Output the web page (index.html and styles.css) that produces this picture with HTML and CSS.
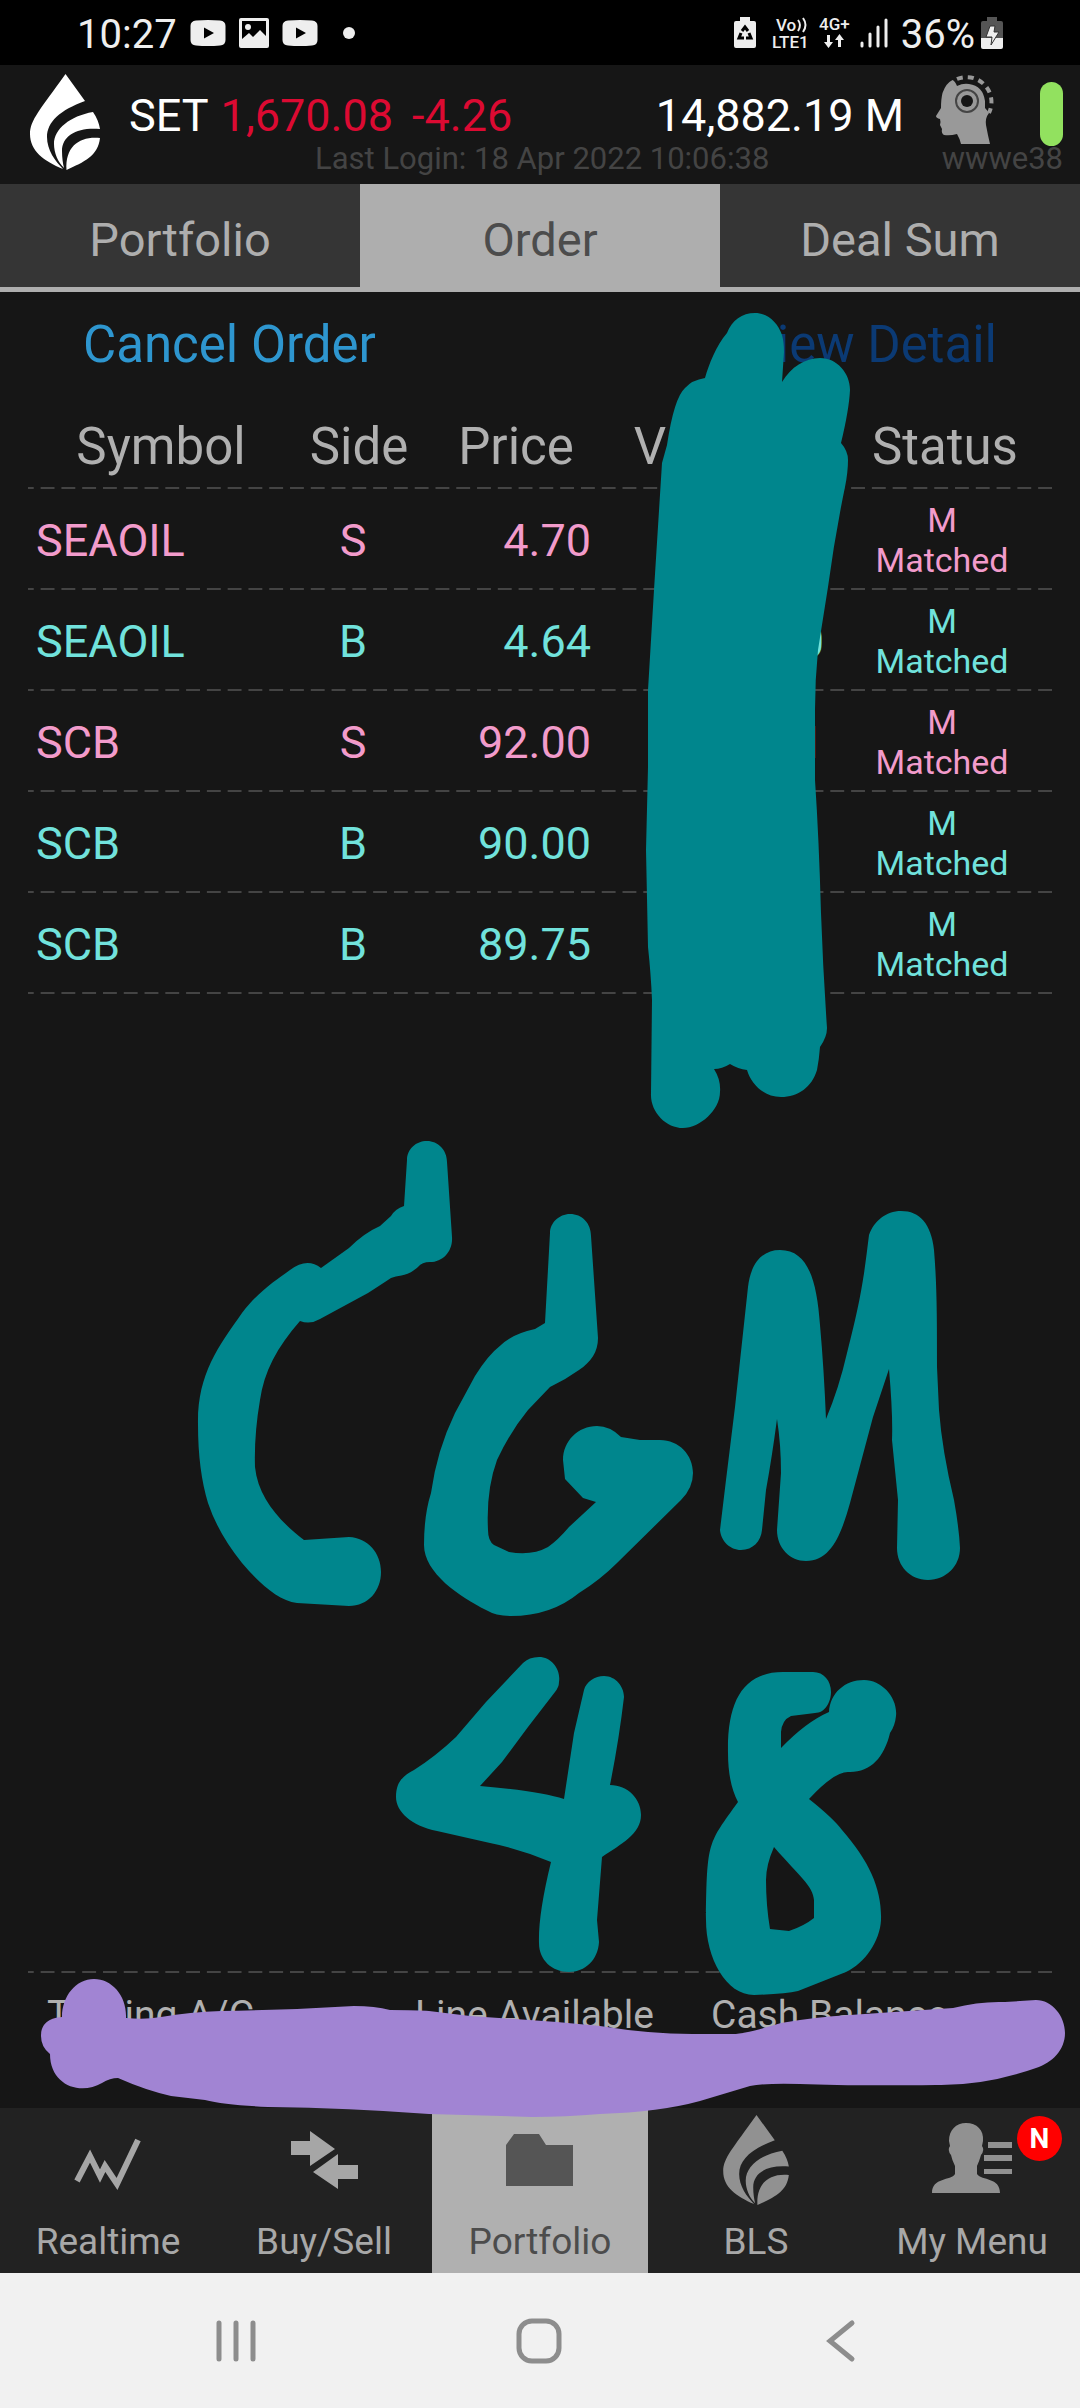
FILE: index.html
```html
<!DOCTYPE html>
<html lang="en">
<head>
<meta charset="utf-8">
<meta name="viewport" content="width=device-width, initial-scale=1">
<title>Order</title>
<link rel="stylesheet" href="styles.css">
</head>
<body>
<svg class="defs" aria-hidden="true">
  <symbol id="drop" viewBox="0 0 71 96">
    <path d="M35.500 0L55 27C30 36 17 48 17 63C17 76 25 87 33 95C14 87 0 77 0 60C0 46 10 36 35.500 0Z"/>
    <path d="M63 38C67 44 69 49 70 55C48 53 32 61 32 77C32 84 33 90 34 94C28 88 24 79 24 70C24 55 40 42 63 38Z"/>
    <path d="M70 64C50 62 35 72 36.500 96C54 88 68 82 70 64Z"/>
  </symbol>
  <symbol id="video" viewBox="0 0 36 26">
    <path fill-rule="evenodd" d="M6 .5Q18-.5 30 .5Q35.500 1 35.500 6V20Q35.500 25 30 25.500Q18 26.500 6 25.500Q.5 25 .5 20V6Q.5 1 6 .5ZM14 7.500V18.500L24 13Z"/>
  </symbol>
</svg>

<div class="app">
  <div class="status-bar">
    <div class="status-group">
      <span>10:27</span>
      <svg class="st-video" width="36" height="26"><use href="#video"/></svg>
      <svg width="30" height="30" viewBox="0 0 30 30"><path fill-rule="evenodd" d="M2 0H28Q30 0 30 2V28Q30 30 28 30H2Q0 30 0 28V2Q0 0 2 0ZM3 3V21L10 15L14 19L21 12L27 18V3Z"/><circle cx="9" cy="9" r="3"/></svg>
      <svg width="36" height="26"><use href="#video"/></svg>
      <svg class="st-dot" width="12" height="12"><circle cx="6" cy="6" r="6"/></svg>
    </div>
    <div class="status-group">
      <svg width="22" height="31" viewBox="0 0 22 31"><path d="M6 0H16V4H20Q22 4 22 6V29Q22 31 20 31H2Q0 31 0 29V6Q0 4 2 4H6Z"/><path d="M8 14L11 10L14 14M15 16L17 21H12M10 21H5L7 16" fill="none" stroke="#000" stroke-width="3"/></svg>
      <svg class="st-volte" width="40" height="46" viewBox="0 -7 40 46"><text x="4" y="14">Vo</text><path d="M26 3Q30 8 26 14M31 1Q36 8 31 15" fill="none" stroke="#eee" stroke-width="2"/><text x="0" y="31">LTE1</text></svg>
      <svg class="st-net" width="36" height="47" viewBox="0 -7 36 47"><text x="0" y="14">4G+</text><path d="M8 19H11V26H14L9.500 32L5 26H8ZM19 31H22V24H25L20.500 18L16 24H19Z"/></svg>
      <svg class="st-signal" width="28" height="30" viewBox="0 0 28 30"><path d="M2 25V28M10 16V28M18 9V28M26 2V28" stroke="#eee" stroke-width="3" stroke-linecap="round"/></svg>
      <span>36%</span>
      <svg class="st-power" width="22" height="32" viewBox="0 0 22 32"><path fill="#555" d="M6 0H16V4H20Q22 4 22 6V22H0V6Q0 4 2 4H6Z"/><path d="M0 21H22V30Q22 32 20 32H2Q0 32 0 30Z"/><path d="M9 9H14L13 15H18L10 28L11 20H5Z" stroke="#333" stroke-width="1"/></svg>
    </div>
  </div>

  <header class="market">
    <svg class="logo" width="71" height="96" role="img" aria-label="BLS"><use href="#drop"/></svg>
    <div class="market-info">
      <div class="market-line">
        <span>SET</span>
        <span class="down">1,670.08</span>
        <span class="down change">-4.26</span>
        <span class="total">14,882.19 M</span>
        <svg class="head" width="60" height="70" viewBox="0 0 60 70"><path fill="#999" d="M16.500 5Q19 6 21 11Q27 8 33 9Q47 11 49 26V33Q51 35 53 38Q49 43 50 50Q52 61 54 69H25Q24 64 21 59Q14 61 8 60Q5 58 6 54L4 50Q5 47 4 44Q0 43 0 41L5 33Q5 24 6.500 18Q10 8 16.500 5Z"/><circle cx="31" cy="26" r="11" fill="none" stroke="#444" stroke-width="2"/><circle cx="31" cy="26" r="6" fill="#161616"/><path d="M21 4A25 25 0 0 1 53 38" fill="none" stroke="#999" stroke-width="4" stroke-dasharray="6 5"/></svg>
        <span class="online"></span>
      </div>
      <div class="login-line"><span>Last Login: 18 Apr 2022 10:06:38</span><span>wwwe38</span></div>
    </div>
  </header>

  <nav class="tabs">
    <a href="#portfolio">Portfolio</a>
    <a href="#order" class="on">Order</a>
    <a href="#deal">Deal Sum</a>
  </nav>

  <main class="orders">
    <div class="actions">
      <button type="button" class="cancel">Cancel Order</button>
      <button type="button" class="detail">View Detail</button>
    </div>
    <table>
      <colgroup><col class="c-symbol"><col class="c-side"><col class="c-price"><col class="c-volume"><col class="c-status"></colgroup>
      <thead>
        <tr><th>Symbol</th><th>Side</th><th>Price</th><th>Volume</th><th class="status">Status</th></tr>
      </thead>
      <tbody>
        <tr class="sell"><td>SEAOIL</td><td class="side">S</td><td class="price">4.70</td><td class="volume"></td><td class="status">M<br>Matched</td></tr>
        <tr class="buy"><td>SEAOIL</td><td class="side">B</td><td class="price">4.64</td><td class="volume">0</td><td class="status">M<br>Matched</td></tr>
        <tr class="sell"><td>SCB</td><td class="side">S</td><td class="price">92.00</td><td class="volume">1</td><td class="status">M<br>Matched</td></tr>
        <tr class="buy"><td>SCB</td><td class="side">B</td><td class="price">90.00</td><td class="volume"></td><td class="status">M<br>Matched</td></tr>
        <tr class="buy"><td>SCB</td><td class="side">B</td><td class="price">89.75</td><td class="volume"></td><td class="status">M<br>Matched</td></tr>
      </tbody>
    </table>
  </main>

  <section class="account">
    <span>Trading A/C</span>
    <span>Line Available</span>
    <span>Cash Balance</span>
  </section>

  <nav class="menu">
    <a href="#realtime"><svg viewBox="0 0 100 100"><path d="M19 69L32 44L42 64L47 54L59 72L80 28" fill="none" stroke="#a6a6a6" stroke-width="6"/></svg>Realtime</a>
    <a href="#buysell"><svg viewBox="0 0 100 100"><path fill="#a6a6a6" d="M17 29H36V19L61 37L36 54V43H17ZM84 53H64V42L39 60L64 77V67H84Z"/></svg>Buy/Sell</a>
    <a href="#portfolio" class="on"><svg viewBox="0 0 100 100"><path fill="#555" d="M16 33L24 22H49L56 33H83V74H16Z"/></svg>Portfolio</a>
    <a href="#bls"><svg viewBox="0 0 100 100"><use href="#drop" x="17" y="3" width="67" height="90" fill="#919191"/></svg>BLS</a>
    <a href="#mymenu"><svg viewBox="0 0 100 100"><path fill="#919191" d="M44 11C55 11 62 18 61 29L60 34Q63 38 59 43Q57 50 55 54V62C60 69 78 65 78 81H10C10 65 29 69 33 62V54Q30 48 29 43Q25 38 28 34L27 29C27 18 34 11 44 11ZM66 30H90V36H66ZM62 43H90V49H62ZM62 57H90V62H62Z"/></svg>My Menu<b class="badge">N</b></a>
  </nav>

  <div class="system-nav">
    <button type="button" aria-label="Recent apps"><svg viewBox="0 0 48 48"><path d="M6 6V42M23 6V42M40 6V42" /></svg></button>
    <button type="button" aria-label="Home"><svg viewBox="0 0 48 48"><rect x="4" y="4" width="40" height="40" rx="13"/></svg></button>
    <button type="button" aria-label="Back"><svg viewBox="0 0 48 48"><path d="M36 6L14 24L36 42"/></svg></button>
  </div>

  <svg class="ink" viewBox="0 0 1080 2408" role="img" aria-label="Marker scribbles">
    <g fill="#00868d">
      <path d="M705 378C709 364 716 346 727 333C732 320 742 313 755 313C768 313 778 323 782 335Q784 342 784 352L782 382C791 367 805 358 820 358C837 358 850 373 850 390Q849 410 841 443Q848 451 848 460Q848 472 845 487Q835 535 828 587L818 650Q815 680 815 710V780Q819 840 821 913Q823 970 827 1028Q827 1037 820 1047Q819 1060 817 1070C812 1087 798 1097 781 1097C764 1097 751 1084 747 1070Q738 1069 730 1064Q722 1069 714 1069Q721 1080 720 1092C720 1110 700 1128 683 1128C666 1128 650 1112 651 1093L652 1000Q651 975 648 947L646 850L648 767V690L654 590L662 463L667 445Q674 398 685 388Q692 380 705 378Z"/>
      <path d="M427 1141C438 1141 447 1150 447 1162L452 1237C453 1251 443 1262 430 1262Q422 1262 418 1267C407 1277 398 1275 391 1278Q382 1284 368 1293L320 1319Q310 1325 300 1321C277 1347 264 1372 260 1400Q254 1435 255 1467C258 1497 279 1521 304 1540L349 1537C368 1538 381 1553 381 1572C381 1591 368 1606 349 1606L297 1603C278 1601 258 1582 242 1563Q218 1533 208 1503Q198 1470 198 1425C197 1375 218 1347 242 1313C258 1292 276 1280 290 1270Q307 1257 321 1268L349 1248Q364 1233 380 1226L391 1216Q395 1209 404 1206L407 1160C407 1149 416 1141 427 1141Z"/>
      <path d="M570 1214C582 1214 591 1223 591 1236L598 1338C598 1352 591 1362 579 1370Q565 1380 550 1387L528 1410Q510 1432 497 1460Q486 1490 488 1530Q488 1541 494 1545L509 1552Q532 1556 548 1547Q558 1540 569 1527L596 1502L583 1498L565 1479L563 1460C563 1441 578 1426 597 1426Q610 1426 621 1437L640 1440H660C679 1440 693 1455 693 1473Q693 1488 681 1500L617 1563Q600 1580 579 1593Q551 1616 511 1616Q496 1616 486 1610C460 1597 424 1573 424 1545Q424 1515 431 1493Q437 1450 455 1413L475 1376Q488 1355 501 1345Q512 1334 535 1329L545 1323L550 1233C550 1223 559 1214 570 1214Z"/>
      <path d="M720 1530C721 1541 730 1550 741 1550C753 1550 761 1541 762 1530L766 1490Q772 1457 777 1419Q781 1445 781 1473L777 1530C777 1548 790 1561 806 1561C831 1561 841 1535 850 1503L873 1417L889 1369Q893 1415 892 1440L898 1500L897 1548C897 1566 910 1580 928 1580C946 1580 960 1566 960 1548Q959 1528 954 1500Q942 1450 939 1410L937 1367C937 1320 937 1285 934 1250C931 1224 920 1211 901 1211C886 1211 874 1221 869 1235C864 1275 862 1295 847 1353Q839 1388 826 1419Q824 1370 820 1325C817 1283 809 1250 780 1250C763 1250 751 1262 748 1287L735 1407L726 1480Z"/>
      <path d="M539 1657C552 1657 561 1670 559 1682Q559 1687 555 1692L528 1727L502 1762L480 1786Q540 1791 564 1799L574 1733L584 1690C586 1682 595 1676 604 1676C616 1676 624 1687 624 1697Q619 1740 610 1785C628 1785 641 1799 641 1815C641 1834 621 1844 602 1857L597 1920L599 1942C598 1960 585 1972 569 1972C552 1972 539 1960 539 1943Q538 1915 551 1862Q520 1849 490 1843L437 1831C412 1826 396 1812 396 1797C396 1780 405 1775 414 1770Q436 1756 456 1737L486 1702L523 1663Q529 1657 539 1657Z"/>
      <path fill-rule="evenodd" d="M813 1672C824 1672 831 1681 831 1692C831 1702 825 1713 815 1713L791 1716Q782 1720 781 1732V1748Q806 1722 829 1712C830 1693 845 1680 864 1680C882 1680 898 1698 896 1716Q895 1726 890 1733C884 1758 870 1773 848 1772Q834 1772 809 1799Q833 1818 842 1830C870 1862 882 1890 881 1920C880 1941 865 1963 846 1972L798 1991Q785 1994 754 1995C726 1995 706 1958 706 1920C707 1840 708 1844 738 1802Q728 1783 728 1753C727 1700 744 1672 783 1672ZM774 1847Q766 1865 766 1880Q766 1905 770 1929L789 1931Q804 1926 814 1918V1900C813 1886 800 1877 774 1847Z"/>
    </g>
    <path fill="#a184d3" d="M62 2017C62 1996 76 1979 94 1979C112 1979 127 1996 126 2018Q145 2020 161 2017Q190 2012 221 2011Q290 2010 354 2006Q375 2006 390 2010Q418 2010 429 2011L470 2016L557 2022L600 2026Q650 2034 692 2034H733Q745 2034 781 2023Q815 2017 850 2015L953 2008Q980 2001 1005 2002L1036 2000C1052 2000 1065 2016 1065 2033C1065 2050 1052 2063 1036 2068Q985 2086 936 2085Q850 2086 800 2084Q765 2083 750 2086Q720 2095 700 2101Q660 2112 600 2114Q565 2117 532 2117L429 2114Q350 2108 268 2107Q225 2105 205 2100L171 2096Q145 2090 118 2078Q110 2078 102 2083C80 2096 50 2085 50 2054Q41 2047 41 2036C41 2022 51 2018 62 2017Z"/>
  </svg>
</div>
</body>
</html>
```

FILE: styles.css
```css
* { box-sizing: border-box; }

body {
  margin: 0;
  background: #161616;
  font-family: Roboto, "Liberation Sans", sans-serif;
  color: #b0b0b0;
}

a { color: inherit; text-decoration: none; }

button {
  padding: 0;
  border: 0;
  background: none;
  font: inherit;
  color: inherit;
}

svg { display: block; flex: none; }

.defs { position: absolute; width: 0; height: 0; }

.app {
  position: relative;
  display: flex;
  flex-direction: column;
  min-height: 100vh;
}

/* Phone status bar */
.status-bar {
  display: flex;
  justify-content: space-between;
  height: 65px;
  padding: 0 77px;
  background: #000;
  color: #eee;
  fill: #eee;
  font-size: 40px;
}

.status-group { display: flex; align-items: center; gap: 13px; }
.status-group text { font-size: 17px; font-weight: 500; }
.status-group span { padding-top: 3px; }
.st-dot { margin-left: 12px; }
.st-volte { margin-left: 3px; }
.st-net { margin-left: -6px; }
.st-signal { margin-left: -8px; }
.st-power { margin-left: -7px; }

/* Market summary */
.market {
  display: flex;
  gap: 28px;
  height: 119px;
  padding: 0 17px 0 30px;
}

.logo { margin-top: 9px; fill: #fff; }
.market-info { flex: 1; }

.market-line {
  display: flex;
  align-items: flex-start;
  gap: 12px;
  height: 77px;
  padding-top: 10px;
  color: #fff;
  font-size: 45px;
  line-height: 82px;
}

.down { color: #dc0a32; }
.change { margin-left: 7px; }
.total { margin-left: auto; }
.head { margin-left: 20px; }

.online {
  width: 23px;
  height: 64px;
  margin: 7px 0 0 32px;
  border-radius: 12px;
  background: #92e15f;
}

.login-line {
  display: flex;
  justify-content: space-between;
  padding-left: 186px;
  color: #444;
  font-size: 31px;
  line-height: 34px;
}

/* Page tabs */
.tabs {
  display: grid;
  grid-template-columns: repeat(3, 1fr);
  height: 108px;
  border-bottom: 5px solid #aeaeae;
  background: #353535;
  color: #aeaeae;
  font-size: 47px;
  text-align: center;
}

.tabs a { padding-top: 26px; line-height: 60px; }
.tabs .on { background: #aeaeae; color: #4c4c4c; }

/* Orders */
.orders { flex: 1; padding: 0 28px; }

.actions {
  display: flex;
  justify-content: space-between;
  padding: 23px 55px 26px;
  font-size: 51px;
  line-height: 60px;
}

.cancel { color: #2e96cf; }
.detail { color: #0b3a74; }

table { width: 100%; border-collapse: collapse; table-layout: fixed; }
.c-symbol { width: 266px; }
.c-side { width: 130px; }
.c-price { width: 184px; }
.c-volume { width: 224px; }
.c-status { width: 220px; }

tr, .account {
  background-image: linear-gradient(90deg, transparent 7px, #444 7px);
  background-repeat: repeat-x;
  background-size: 2.03% 2px;
}

tr { background-position: right bottom; }

th {
  padding: 16px 0 12px;
  font-size: 51px;
  font-weight: 400;
  line-height: 60px;
}

td {
  height: 101px;
  padding: 2px 0 0 8px;
  font-size: 45px;
  line-height: 52px;
}

.side { padding: 2px 12px 0 0; text-align: center; }
.price { padding: 2px 17px 0 0; text-align: right; }
.volume { padding: 2px 8px 0 0; text-align: right; }
td.status { padding: 0; font-size: 34px; line-height: 40px; text-align: center; }
th.status { padding-left: 6px; }
.sell { color: #f29bcb; }
.buy { color: #71e2dc; }

/* Account summary */
.account {
  display: grid;
  grid-template-columns: 368fr 296fr 341fr;
  height: 137px;
  margin: 0 28px;
  padding: 21px 0 0 19px;
  background-position: right top;
  font-size: 39px;
  line-height: 46px;
}

/* Bottom menu */
.menu {
  display: grid;
  grid-template-columns: repeat(5, 1fr);
  height: 165px;
  background: #222;
  font-size: 37px;
  line-height: 44px;
}

.menu a {
  position: relative;
  display: flex;
  flex-direction: column;
  align-items: center;
  padding-top: 4px;
  color: #a8a8a8;
}

.menu svg { width: 100px; height: 100px; margin-bottom: 8px; }
.menu .on { background: #b0b0b0; color: #4c4c4c; }

.badge {
  position: absolute;
  top: 8px;
  right: 18px;
  width: 45px;
  height: 45px;
  border-radius: 50%;
  background: #f00;
  color: #fff;
  font-size: 28px;
  line-height: 45px;
  text-align: center;
}

/* Phone navigation */
.system-nav {
  display: flex;
  justify-content: space-between;
  height: 135px;
  padding: 0 216px 0 213px;
  background: #f1f1f1;
}

.system-nav svg {
  width: 48px;
  height: 48px;
  fill: none;
  stroke: #8d8d8d;
  stroke-width: 5;
  stroke-linecap: round;
}

/* Freehand marker layer */
.ink {
  position: absolute;
  top: 0;
  left: 0;
  width: 100%;
  height: 100%;
  pointer-events: none;
}
```
